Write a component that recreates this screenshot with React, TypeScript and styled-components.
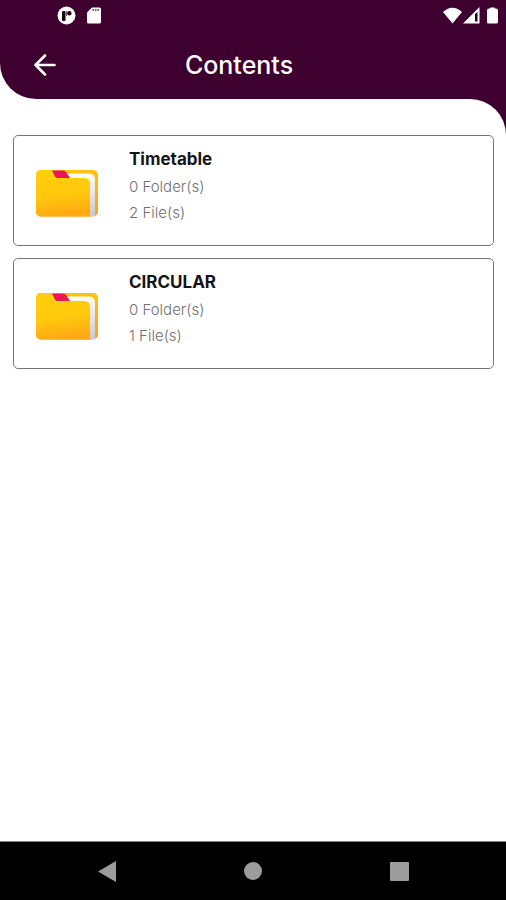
import React from "react";
import styled, { createGlobalStyle } from "styled-components";

const PURPLE = "#3d002f";

const GlobalStyle = createGlobalStyle`
  *, *::before, *::after { box-sizing: border-box; }
  body { margin: 0; background: #fff; font-family: Inter, Roboto, sans-serif; }
`;

const Screen = styled.div`
  display: flex;
  flex-direction: column;
  min-height: 100vh;
  background: #fff;
`;

const Header = styled.header`
  background: ${PURPLE};
  color: #fff;
  border-bottom-left-radius: 36px;
`;

const StatusBar = styled.div`
  display: flex;
  justify-content: space-between;
  align-items: center;
  height: 31px;
  padding: 0 8px 0 57px;
`;

const IconGroup = styled.div<{ $gap: number }>`
  display: flex;
  align-items: center;
  gap: ${({ $gap }) => $gap}px;
  svg { display: block; }
`;

const TitleBar = styled.div`
  display: grid;
  grid-template-columns: 68px 1fr 96px;
  align-items: center;
  height: 68px;
`;

const BackButton = styled.button`
  justify-self: end;
  display: grid;
  place-items: center;
  width: 46px;
  height: 46px;
  padding: 0;
  border: 0;
  background: none;
  color: inherit;
  cursor: pointer;
`;

const Title = styled.h1`
  margin: 0;
  text-align: center;
  font-size: 25px;
  line-height: 32px;
  font-weight: 500;
`;

const Body = styled.div`
  flex: 1;
  display: flex;
  background: ${PURPLE};
`;

const Panel = styled.main`
  flex: 1;
  padding: 36px 12px 24px 13px;
  background: #fff;
  border-top-right-radius: 36px;
`;

const FolderList = styled.ul`
  display: flex;
  flex-direction: column;
  gap: 12px;
  margin: 0;
  padding: 0;
  list-style: none;
`;

const FolderCard = styled.li`
  display: flex;
  gap: 31px;
  min-height: 111px;
  padding: 11px 22px;
  border: 1px solid #777;
  border-radius: 5px;
`;

const FolderArt = styled.svg`
  flex: none;
  align-self: center;
  display: block;
  margin-top: 6px;
`;

const FolderText = styled.div`
  display: flex;
  flex-direction: column;
`;

const FolderName = styled.h2`
  margin: 0 0 3px;
  font-size: 17px;
  line-height: 24px;
  font-weight: 700;
  color: #151515;
`;

const FolderMeta = styled.p`
  margin: 0;
  font-size: 15px;
  line-height: 26px;
  font-weight: 300;
  color: #707070;
`;

const NavBar = styled.nav`
  display: grid;
  grid-template-columns: repeat(3, 146px);
  justify-content: center;
  height: 59px;
  border-top: 1px solid #8a8a8a;
  background: #000;
`;

const NavButton = styled.button`
  display: grid;
  place-items: center;
  padding: 0;
  border: 0;
  background: none;
  color: #9c9c9c;
  cursor: pointer;
`;

const FolderIcon = () => (
  <FolderArt width="62" height="47" viewBox="0 0 62 47" aria-hidden="true">
    <defs>
      <linearGradient id="folderFront" x1="0" y1="0" x2="0.15" y2="1">
        <stop offset="0" stopColor="#ffd00c" />
        <stop offset="0.6" stopColor="#ffc80d" />
        <stop offset="1" stopColor="#ffaa13" />
      </linearGradient>
      <linearGradient id="folderBack" x1="0" y1="0" x2="0" y2="1">
        <stop offset="0" stopColor="#ffc316" />
        <stop offset="1" stopColor="#ff9d22" />
      </linearGradient>
      <linearGradient id="folderPaper" x1="0" y1="0" x2="0" y2="1">
        <stop offset="0" stopColor="#fffdf5" />
        <stop offset="1" stopColor="#ccc9ce" />
      </linearGradient>
    </defs>
    <rect width="62" height="46.5" rx="5" fill="url(#folderBack)" />
    <path d="M28 3.500H53Q59 3.500 59 9.500V46H50V12L30 8Z" fill="url(#folderPaper)" />
    <path d="M5 0H17L22 8H48Q54 8 54 14V46.500H5Q0 46.500 0 41.500V5Q0 0 5 0Z" fill="url(#folderFront)" />
    <path d="M16 .5H27Q29 .5 30 2L34 8H22Q20 8 19 6.500Z" fill="#ed1654" />
  </FolderArt>
);

const folders = [
  { name: "Timetable", folderCount: 0, fileCount: 2 },
  { name: "CIRCULAR", folderCount: 0, fileCount: 1 },
];

export default function App() {
  return (
    <Screen>
      <GlobalStyle />
      <Header>
        <StatusBar>
          <IconGroup $gap={11}>
            <svg width="19" height="19" viewBox="0 0 19 19" aria-hidden="true">
              <circle cx="9.500" cy="9.500" r="9" fill="#fff" />
              <rect x="5" y="5" width="3.500" height="10" rx="1" fill="#15000f" />
              <path d="M9 5H10V10H9Z" fill="#80576f" />
              <circle cx="12.300" cy="7.200" r="2.200" fill="#15000f" />
            </svg>
            <svg width="14" height="17" viewBox="0 0 14 17" aria-hidden="true">
              <path d="M5 .5H12.500Q14 .5 14 2V15Q14 16.500 12.500 16.500H1.500Q0 16.500 0 15V5.500Z" fill="#fff" />
              <path d="M5.500 3H12" stroke="#725266" strokeWidth="2" strokeDasharray="1.500 1" />
            </svg>
          </IconGroup>
          <IconGroup $gap={1}>
            <svg width="19" height="17" viewBox="0 0 19 17" aria-hidden="true">
              <path d="M0 5Q9.500 -3.500 19 5L9.500 16.500Z" fill="#fff" />
            </svg>
            <svg width="17" height="17" viewBox="0 0 17 17" aria-hidden="true">
              <path d="M0 16.500L16.500 0V16.500Z" fill="#fff" />
              <path d="M12 7L14.500 5V14.500H12Z" fill="#25001c" />
            </svg>
            <svg width="17" height="17" viewBox="0 0 17 17" aria-hidden="true">
              <path d="M9 1.500Q9 .5 10 .5H13Q14 .5 14 1.500H15Q17 1.500 17 3.500V15Q17 16.500 15.500 16.500H7.500Q6 16.500 6 15V3.500Q6 1.500 8 1.500Z" fill="#fff" />
            </svg>
          </IconGroup>
        </StatusBar>
        <TitleBar>
          <BackButton type="button" aria-label="Back">
            <svg width="22" height="22" viewBox="0 0 22 22" fill="none" stroke="currentColor" strokeWidth="2.600" strokeLinecap="round" strokeLinejoin="round" aria-hidden="true">
              <path d="M20.500 11H1.500M11 1.500L1.500 11L11 20.500" />
            </svg>
          </BackButton>
          <Title>Contents</Title>
        </TitleBar>
      </Header>
      <Body>
        <Panel>
          <FolderList>
            {folders.map((folder) => (
              <FolderCard key={folder.name}>
                <FolderIcon />
                <FolderText>
                  <FolderName>{folder.name}</FolderName>
                  <FolderMeta>{`${folder.folderCount} Folder(s)`}</FolderMeta>
                  <FolderMeta>{`${folder.fileCount} File(s)`}</FolderMeta>
                </FolderText>
              </FolderCard>
            ))}
          </FolderList>
        </Panel>
      </Body>
      <NavBar aria-label="System">
        <NavButton type="button" aria-label="Back">
          <svg width="18" height="21" viewBox="0 0 18 21" aria-hidden="true">
            <path d="M18 0V21L0 10.500Z" fill="currentColor" />
          </svg>
        </NavButton>
        <NavButton type="button" aria-label="Home">
          <svg width="18" height="18" viewBox="0 0 18 18" aria-hidden="true">
            <circle cx="9" cy="9" r="9" fill="currentColor" />
          </svg>
        </NavButton>
        <NavButton type="button" aria-label="Recent apps">
          <svg width="19" height="19" viewBox="0 0 19 19" aria-hidden="true">
            <rect width="19" height="19" rx="1" fill="currentColor" />
          </svg>
        </NavButton>
      </NavBar>
    </Screen>
  );
}
